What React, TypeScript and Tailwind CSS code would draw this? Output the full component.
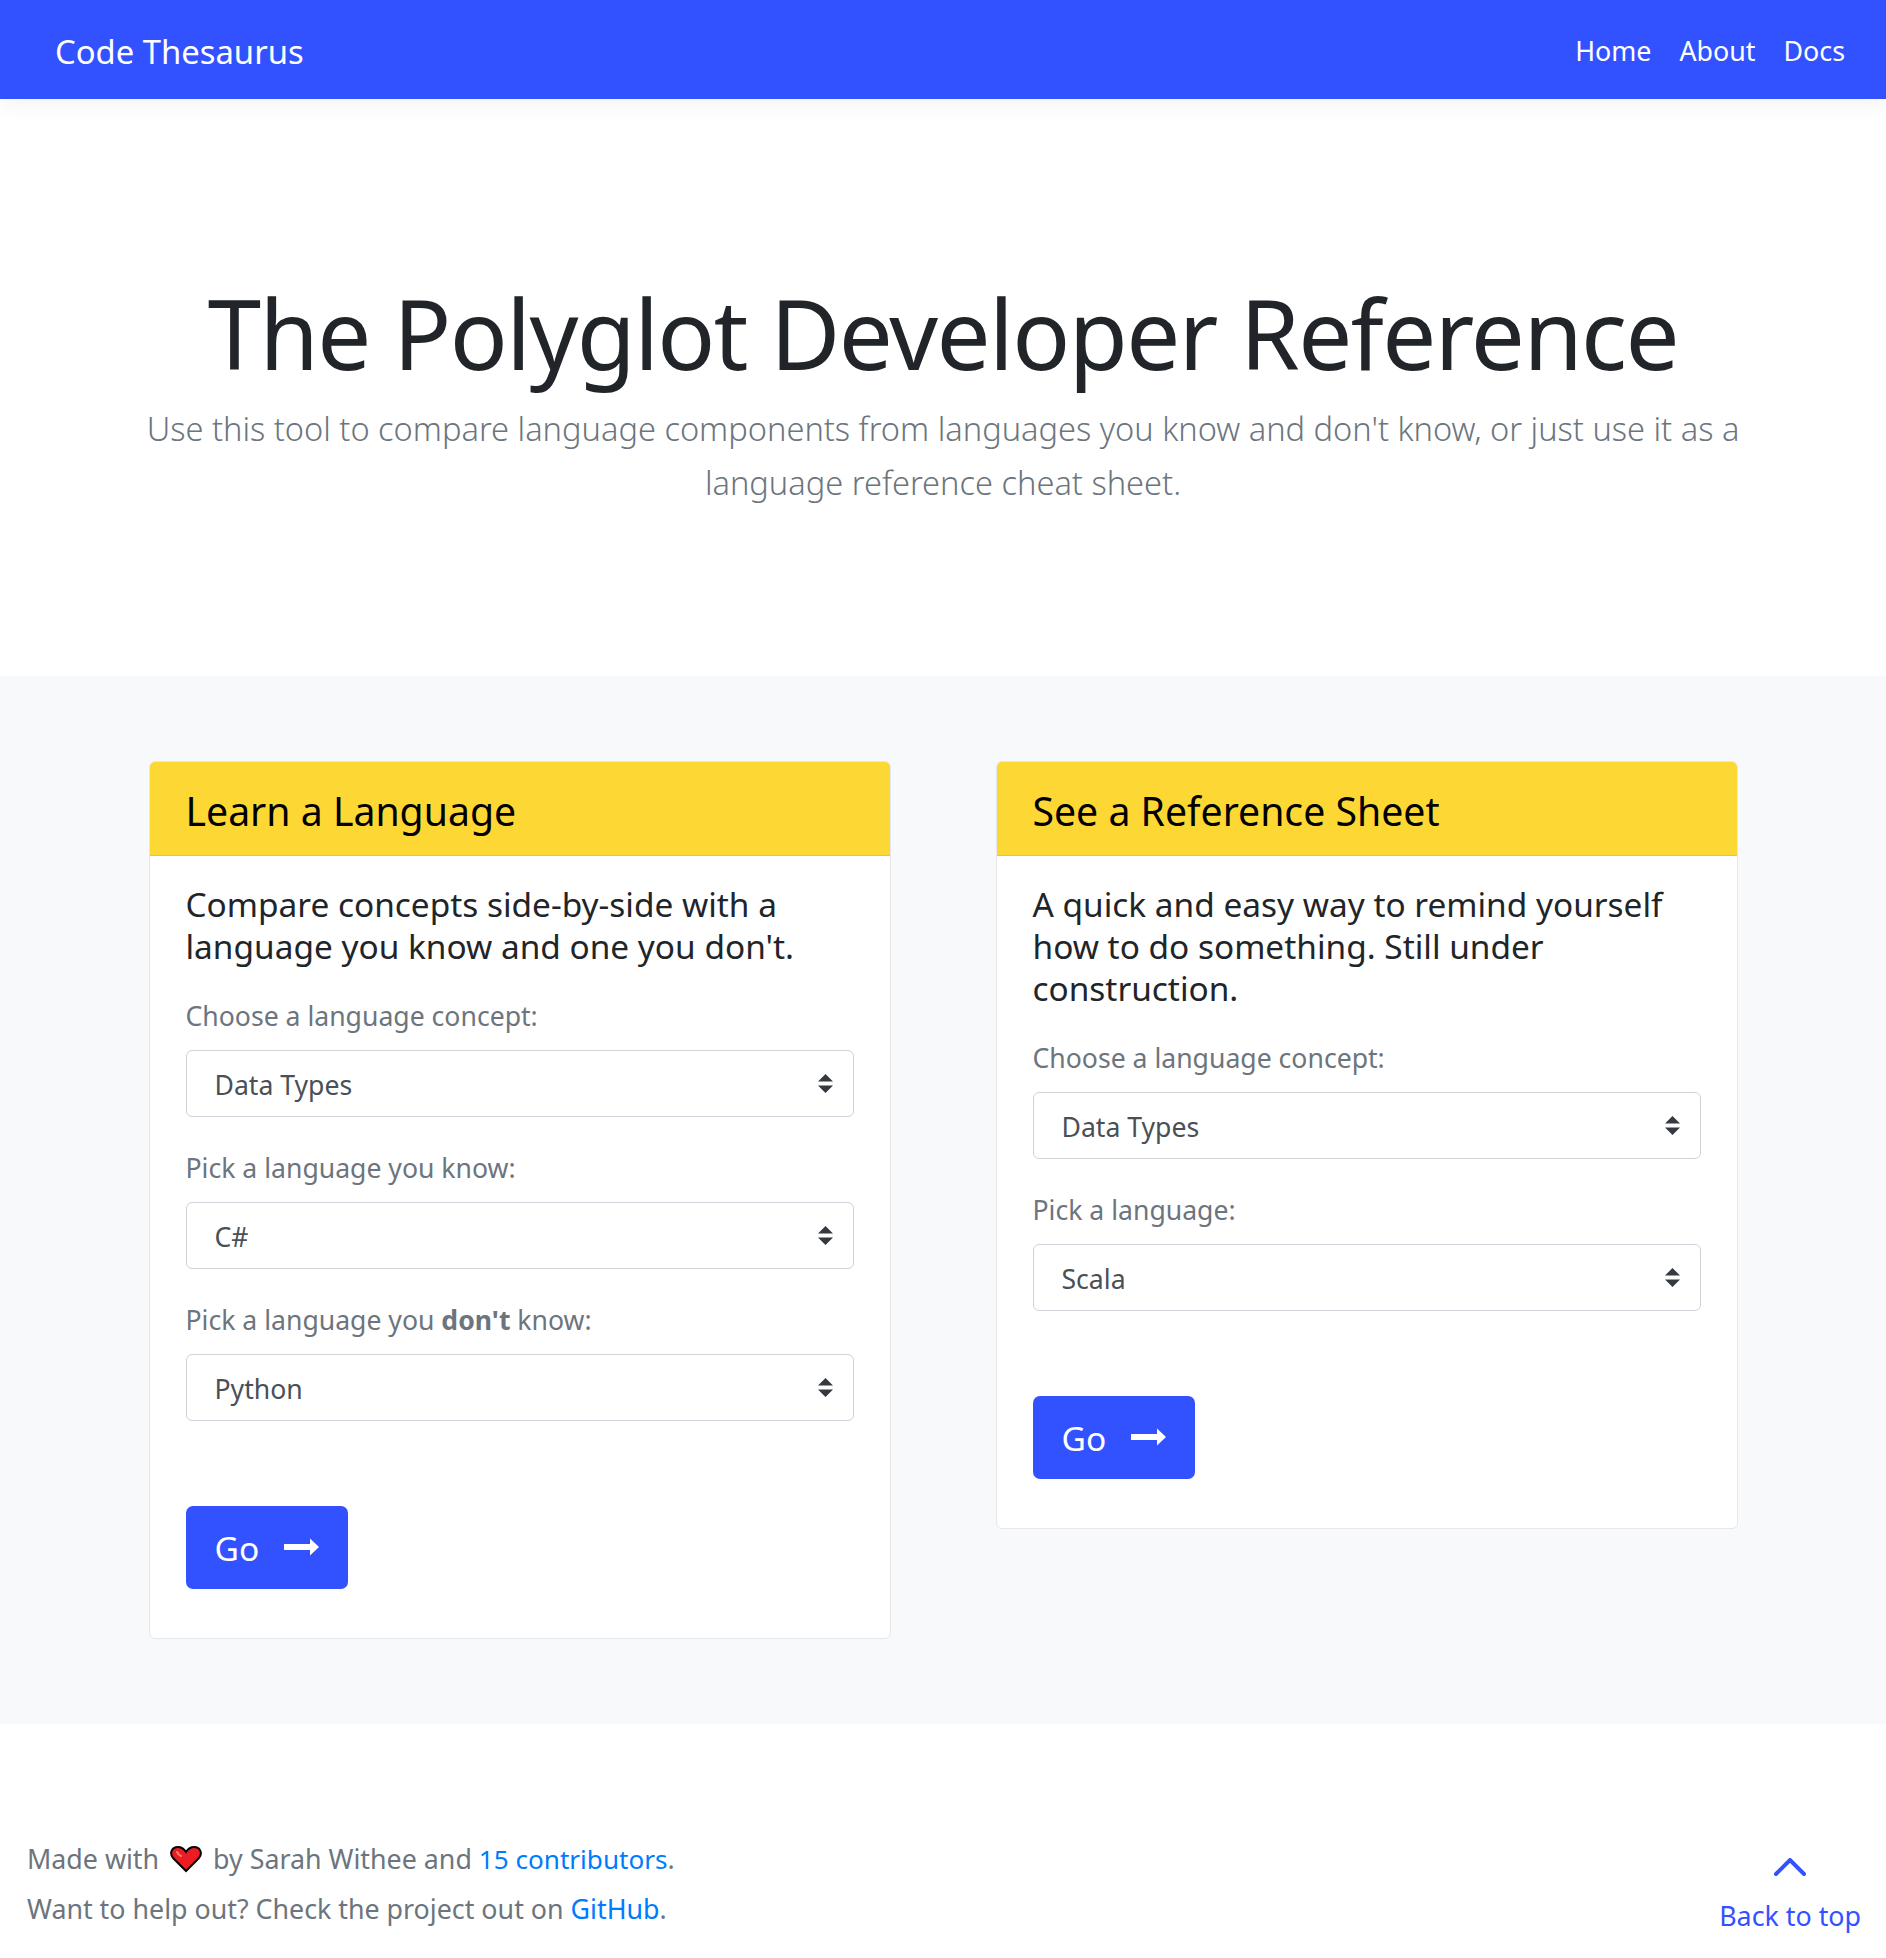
function Chevrons() {
  return (
    <svg viewBox="0 0 4 5" className="pointer-events-none absolute right-[21px] top-[24px] h-[19px] w-[15px]" preserveAspectRatio="none">
      <path fill="#343a40" d="M2 0L0 2h4zm0 5L0 3h4z" />
    </svg>
  );
}

function Field({ label, value }: { label: React.ReactNode; value: string }) {
  return (
    <div className="mb-[28px]">
      <label className="mb-[10px] block text-[26.6px] leading-[47px] text-[#6c757d]">{label}</label>
      <div className="relative">
        <select
          defaultValue={value}
          className="h-[67px] w-full appearance-none rounded-[6px] border border-[#ced4da] bg-white pl-[28px] pr-[50px] pt-[5px] text-[26.6px] text-[#495057] outline-none"
        >
          <option>{value}</option>
        </select>
        <Chevrons />
      </div>
    </div>
  );
}

function GoButton() {
  return (
    <button className="mt-[85px] flex h-[83px] w-[162px] items-center rounded-[7px] bg-[#3352ff] pl-[29px] pt-[2px] text-[33.5px] text-white">
      Go
      <svg viewBox="0 0 36 20" className="ml-[25px] mt-[-3px] h-[20px] w-[36px]">
        <path fill="#fff" d="M0 7h26V1.500L35 10l-9 8.500V13H0z" />
      </svg>
    </button>
  );
}

function Card({ title, lead, children }: { title: string; lead: string; children: React.ReactNode }) {
  return (
    <div className="w-[742px] self-start overflow-hidden rounded-[6px] border border-[#e5e7ea] bg-white">
      <div className="h-[94px] border-b border-[#e8c832] bg-[#fdd835] pl-[36px] pt-[24px] text-[39.2px] leading-[50px] text-black">
        {title}
      </div>
      <div className="px-[36px] pb-[49px] pt-[27px]">
        <p className="mb-[26px] text-[33.4px] leading-[42px] text-[#212529]">{lead}</p>
        {children}
        <GoButton />
      </div>
    </div>
  );
}

export default function App() {
  return (
    <div className="h-[1958px] bg-white font-['Noto_Sans','Open_Sans',sans-serif]">
      <nav className="relative flex h-[99px] items-center justify-between bg-[#3352ff] pl-[55px] pr-[41px] shadow-[0_6px_20px_rgba(0,0,0,0.05)]">
        <a className="mt-[4px] text-[32.8px] text-white">Code Thesaurus</a>
        <div className="mt-[4px] flex gap-[28px] text-[26.8px] text-white">
          <a>Home</a>
          <a>About</a>
          <a>Docs</a>
        </div>
      </nav>
      <header className="flex h-[577px] flex-col items-center pt-[174px] text-center">
        <h1 className="text-[96px] font-normal leading-[120px] tracking-[-1.6px] text-[#212529]">The Polyglot Developer Reference</h1>
        <p className="mt-[9px] w-[1620px] text-[32.6px] font-light leading-[54px] text-[#6c757d]">
          Use this tool to compare language components from languages you know and don't know, or just use it as a language reference cheat sheet.
        </p>
      </header>
      <section className="flex h-[1048px] justify-center gap-[105px] bg-[#f8f9fa] pt-[85px]">
        <Card title="Learn a Language" lead="Compare concepts side-by-side with a language you know and one you don't.">
          <Field label="Choose a language concept:" value="Data Types" />
          <Field label="Pick a language you know:" value="C#" />
          <Field
            label={
              <>
                Pick a language you <strong>don't</strong> know:
              </>
            }
            value="Python"
          />
        </Card>
        <Card title="See a Reference Sheet" lead="A quick and easy way to remind yourself how to do something. Still under construction.">
          <Field label="Choose a language concept:" value="Data Types" />
          <Field label="Pick a language:" value="Scala" />
        </Card>
      </section>
      <footer className="flex justify-between pl-[27px] pr-[25px] pt-[110px] text-[26.8px] text-[#6c757d]">
        <div className="leading-[50px]">
          <p className="flex items-center">
            Made with
            <svg viewBox="0 0 32 28" className="mx-[11px] h-[28px] w-[32px]">
              <path fill="#ed1c24" stroke="#000" strokeWidth="2" d="M16 26L3 13C-1 8 2 2 8 2c4 0 6 2 8 5 2-3 4-5 8-5 6 0 9 6 5 11z" />
              <path fill="none" stroke="#f47b6b" strokeWidth="2" strokeLinecap="round" d="M7 7c1 2 2 3 4 4" />
            </svg>
            by Sarah Withee and&nbsp;<a className="text-[26.1px] text-[#007bff]">15 contributors</a>.
          </p>
          <p>
            Want to help out? Check the project out on <a className="text-[#007bff]">GitHub</a>.
          </p>
        </div>
        <a className="flex flex-col items-center pt-[24px] text-[#3352ff]">
          <svg viewBox="0 0 32 18" className="h-[18px] w-[32px]">
            <path fill="none" stroke="#3352ff" strokeWidth="4" strokeLinecap="round" d="M2 16L16 2l14 14" />
          </svg>
          <span className="mt-[18px] leading-[43px]">Back to top</span>
        </a>
      </footer>
    </div>
  );
}
